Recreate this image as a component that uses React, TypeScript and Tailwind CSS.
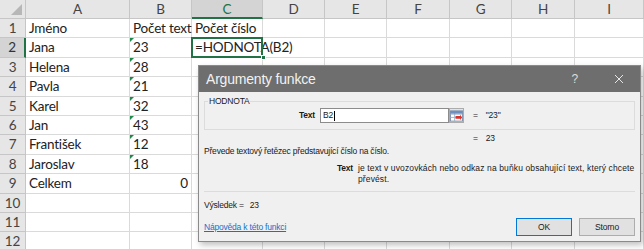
import React from "react";

const letters = ["A", "B", "C", "D", "E", "F", "G", "H", "I"];

interface Row {
  n: number;
  a?: string;
  b?: string;
  bNum?: boolean;
  bTri?: boolean;
  c?: string;
}

const rows: Row[] = [
  { n: 1, a: "Jméno", b: "Počet text", c: "Počet číslo" },
  { n: 2, a: "Jana", b: "23", bTri: true, c: "=HODNOTA(B2)" },
  { n: 3, a: "Helena", b: "28", bTri: true },
  { n: 4, a: "Pavla", b: "21", bTri: true },
  { n: 5, a: "Karel", b: "32", bTri: true },
  { n: 6, a: "Jan", b: "43", bTri: true },
  { n: 7, a: "František", b: "12", bTri: true },
  { n: 8, a: "Jaroslav", b: "18", bTri: true },
  { n: 9, a: "Celkem", b: "0", bNum: true },
  { n: 10 },
  { n: 11 },
  { n: 12 },
];

function Cell({ children, className = "" }: { children?: React.ReactNode; className?: string }) {
  return (
    <div
      className={`relative h-[19.4px] border-r border-b border-[#dadada] px-[3px] leading-[19px] whitespace-nowrap ${className}`}
    >
      {children}
    </div>
  );
}

function Triangle() {
  return (
    <span className="absolute left-0 top-0 w-0 h-0 border-t-[4px] border-r-[4px] border-t-[#1e8a4a] border-r-transparent" />
  );
}

function RefIcon() {
  return (
    <svg width="14" height="12" viewBox="0 0 14 12">
      <rect x="0.5" y="0.5" width="13" height="11" fill="#fff" stroke="#7d8fa8" />
      <line x1="0.5" y1="4" x2="13.5" y2="4" stroke="#9fb0c6" />
      <line x1="0.5" y1="7.5" x2="13.5" y2="7.5" stroke="#9fb0c6" />
      <line x1="5" y1="0.5" x2="5" y2="11.5" stroke="#9fb0c6" />
      <rect x="0.5" y="0.5" width="13" height="3" fill="#6d8fc0" />
      <path d="M6 6 L11 6 L11 4.5 L13 7.5 L11 10.5 L11 9 L6 9 Z" fill="#d9342b" />
    </svg>
  );
}

function Dialog() {
  return (
    <div className="absolute left-[198px] top-[65px] w-[443px] h-[177px] bg-[#f0f0f0] border border-[#8a8a8a] shadow-[2px_3px_6px_rgba(0,0,0,0.25)] font-['Liberation_Sans',sans-serif] text-[8.5px] leading-[11px] text-[#1a1a1a] flex flex-col">
      <div className="shrink-0 h-[26px] bg-[#6e6e6e] flex items-center pl-[7px] pr-[16px] text-[14px] leading-[16px] text-[#f2f2f2]">
        <span className="flex-1">Argumenty funkce</span>
        <span className="text-[12px] text-[#dcdcdc] mr-[36px]">?</span>
        <svg width="10" height="10" viewBox="0 0 10 10">
          <path d="M1 1 L9 9 M9 1 L1 9" stroke="#e6e6e6" strokeWidth="1" />
        </svg>
      </div>
      <div className="flex-1 flex flex-col px-[5px]">
        <div className="relative mt-[9px] h-[29px] border border-[#dcdcdc] flex items-center">
          <span className="absolute left-[3px] top-[-6px] bg-[#f0f0f0] px-[1px]">HODNOTA</span>
          <span className="shrink-0 w-[110px] text-right font-bold">Text</span>
          <div className="ml-[5px] w-[129px] h-[15px] bg-white border border-[#8c8c8c] flex items-center pl-[2px]">
            B2<span className="ml-[1px] w-px h-[10px] bg-black" />
          </div>
          <div className="w-[15px] h-[15px] border border-[#acacac] bg-[#e4e4e4] flex items-center justify-center">
            <RefIcon />
          </div>
          <span className="ml-[9px]">=</span>
          <span className="ml-[8px]">"23"</span>
        </div>
        <div className="mt-[3px] pl-[269px] flex">
          <span>=</span>
          <span className="ml-[8px]">23</span>
        </div>
        <div className="mt-[2px]">Převede textový řetězec představující číslo na číslo.</div>
        <div className="mt-[6px] flex">
          <span className="shrink-0 w-[149px] text-right font-bold">Text</span>
          <span className="ml-[5px] tracking-[0.12px] whitespace-nowrap">
            je text v uvozovkách nebo odkaz na buňku obsahující text, který chcete
            <br />
            převést.
          </span>
        </div>
        <div className="mt-[6px] border-t border-[#dcdcdc]" />
        <div className="mt-[8px]">
          Výsledek =<span className="ml-[6px]">23</span>
        </div>
        <div className="mt-[7px] flex items-center">
          <span className="flex-1 text-[#1a6fc9] underline">Nápověda k této funkci</span>
          <button className="w-[56px] h-[18px] bg-[#e1e1e1] border border-[#0078d7] text-[8.5px]">OK</button>
          <button className="ml-[7px] w-[56px] h-[18px] bg-[#e1e1e1] border border-[#adadad] text-[8.5px]">Storno</button>
        </div>
      </div>
    </div>
  );
}

export default function App() {
  return (
    <div className="relative w-[644px] h-[249px] overflow-hidden bg-white font-['Lato',sans-serif] text-[13.5px] tracking-[-0.2px] text-[#222]">
      <div className="grid grid-cols-[26px_104px_62px_71px_62px_62px_63px_62px_63px_69px]">
        {/* header row */}
        <div className="relative h-[19px] bg-[#e6e6e6] border-r border-b border-[#c6c6c6]">
          <svg className="absolute right-[3px] bottom-[3px]" width="11" height="11" viewBox="0 0 11 11">
            <path d="M11 0 L11 11 L0 11 Z" fill="#b7b7b7" />
          </svg>
        </div>
        {letters.map((l) =>
          l === "C" ? (
            <div
              key={l}
              className="h-[19px] bg-[#d4d4d4] border-r border-[#c6c6c6] border-b-2 border-b-[#217346] text-center leading-[19px] text-[#217346]"
            >
              {l}
            </div>
          ) : (
            <div
              key={l}
              className="h-[19px] bg-[#e6e6e6] border-r border-b border-[#c6c6c6] text-center leading-[19px] text-[#444]"
            >
              {l}
            </div>
          )
        )}

        {rows.map((r) => (
          <React.Fragment key={r.n}>
            {r.n === 2 ? (
              <div className="h-[19.4px] bg-[#d4d4d4] border-r-2 border-r-[#217346] border-b border-b-[#c6c6c6] text-center leading-[19px] text-[#333]">
                {r.n}
              </div>
            ) : (
              <div className="h-[19.4px] bg-[#e6e6e6] border-r border-b border-[#c6c6c6] text-center leading-[19px] text-[#444]">
                {r.n}
              </div>
            )}
            <Cell>{r.a}</Cell>
            <Cell className={r.bNum ? "text-right" : ""}>
              {r.bTri && <Triangle />}
              {r.b}
            </Cell>
            {r.n === 2 ? (
              <div className="relative z-10 h-[19.4px] border-b border-[#dadada] whitespace-nowrap leading-[19px]">
                <div className="absolute left-[-1px] top-[-1px] w-[72px] h-[21px] border-2 border-[#217346]" />
                <span className="absolute right-[-3px] bottom-[-3px] w-[5px] h-[5px] bg-[#217346] border border-white" />
                <span className="pl-[3px]">{r.c}</span>
              </div>
            ) : (
              <Cell>{r.c}</Cell>
            )}
            <Cell />
            <Cell />
            <Cell />
            <Cell />
            <Cell />
            <Cell />
          </React.Fragment>
        ))}
      </div>
      <Dialog />
    </div>
  );
}
